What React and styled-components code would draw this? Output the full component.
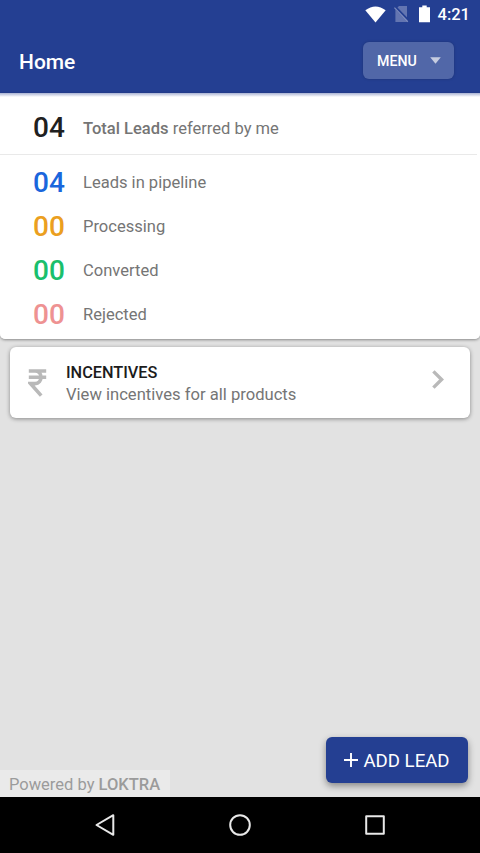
import React from "react";
import styled, { createGlobalStyle } from "styled-components";

const leads = [
  { count: "04", label: "Leads in pipeline", color: "#1a66dc" },
  { count: "00", label: "Processing", color: "#eb9f20" },
  { count: "00", label: "Converted", color: "#1abf6c" },
  { count: "00", label: "Rejected", color: "#ee9292" },
];

function StatusBar() {
  return (
    <Status>
      <svg width="21" height="17" viewBox="0 0 21 17">
        <path d="M0.3 4.2Q10.5 -3.4 20.7 4.2L10.5 16.6Z" fill="#fff" />
      </svg>
      <svg width="16" height="18" viewBox="0 0 16 18">
        <path d="M5 1H13V17H1.4V4.6Z" fill="#6375b1" />
        <path d="M1.2 2.2L14.2 15.8" stroke="#243f92" strokeWidth="3" />
        <path d="M0.4 2.6L13.8 16.8" stroke="#7f8dbf" strokeWidth="1.3" />
      </svg>
      <svg width="11" height="18" viewBox="0 0 11 18">
        <path d="M3.3 0.5H7.7V2.3H11V17.3H0V2.3H3.3Z" fill="#fff" />
      </svg>
      <Clock>4:21</Clock>
    </Status>
  );
}

function App() {
  return (
    <Screen>
      <GlobalStyle />
      <StatusBar />
      <Header>
        <Title>Home</Title>
        <MenuBtn>
          MENU
          <svg width="11" height="7" viewBox="0 0 11 7">
            <path d="M0.2 0.2H10.8L5.5 6.8Z" fill="#c6cce0" />
          </svg>
        </MenuBtn>
      </Header>

      <Summary>
        <TotalRow>
          <Count $color="#202020">04</Count>
          <TotalLabel>
            <b>Total Leads</b> referred by me
          </TotalLabel>
        </TotalRow>
        <LeadList>
          {leads.map((lead) => (
            <LeadRow key={lead.label}>
              <Count $color={lead.color}>{lead.count}</Count>
              <Label>{lead.label}</Label>
            </LeadRow>
          ))}
        </LeadList>
      </Summary>

      <Incentives>
        <svg width="19" height="28" viewBox="0 0 19 28">
          <path
            d="M0.8 2H18.2M0.8 8.2H18.2M2 2H7C15 2 15 14.6 7 14.6H2.6L13.2 26.6"
            fill="none"
            stroke="#b9b9b9"
            strokeWidth="3.6"
          />
        </svg>
        <IncentiveText>
          <IncentiveTitle>INCENTIVES</IncentiveTitle>
          <IncentiveInfo>View incentives for all products</IncentiveInfo>
        </IncentiveText>
        <Chevron width="12" height="19" viewBox="0 0 12 19">
          <path
            d="M1.4 1.4L9.6 9.5L1.4 17.6"
            fill="none"
            stroke="#b9b9b9"
            strokeWidth="3.4"
          />
        </Chevron>
      </Incentives>

      <Bottom>
        <Powered>
          Powered by <b>LOKTRA</b>
        </Powered>
        <AddBtn>
          <svg width="14" height="14" viewBox="0 0 14 14">
            <path d="M7 0V14M0 7H14" stroke="#fff" strokeWidth="1.9" />
          </svg>
          <AddText>ADD LEAD</AddText>
        </AddBtn>
      </Bottom>

      <NavBar>
        <svg width="22" height="24" viewBox="0 0 22 24">
          <path
            d="M19.3 2.2V21.8L2.5 12Z"
            fill="none"
            stroke="#e8e8e8"
            strokeWidth="2"
            strokeLinejoin="round"
          />
        </svg>
        <svg width="24" height="24" viewBox="0 0 24 24">
          <circle cx="12" cy="12" r="9.8" fill="none" stroke="#e8e8e8" strokeWidth="2" />
        </svg>
        <svg width="22" height="22" viewBox="0 0 22 22">
          <rect
            x="2.2"
            y="2.2"
            width="17.6"
            height="17.6"
            fill="none"
            stroke="#e8e8e8"
            strokeWidth="2"
            strokeLinejoin="round"
          />
        </svg>
      </NavBar>
    </Screen>
  );
}

export default App;

const GlobalStyle = createGlobalStyle`
  * {
    box-sizing: border-box;
  }
  body {
    margin: 0;
    font-family: Roboto, "Liberation Sans", sans-serif;
  }
  svg {
    display: block;
    flex-shrink: 0;
  }
  b {
    font-weight: 500;
  }
`;

const Screen = styled.div`
  display: flex;
  flex-direction: column;
  width: 480px;
  height: 853px;
  overflow: hidden;
  background: #e2e2e2;
`;

const Status = styled.div`
  display: flex;
  align-items: center;
  justify-content: flex-end;
  gap: 8px;
  height: 28px;
  padding-right: 10px;
  background: #243f92;

  svg:nth-of-type(2) {
    margin-right: 1px;
  }
`;

const Clock = styled.span`
  color: #fff;
  font-size: 16.5px;
  font-weight: 500;
  line-height: 29px;
`;

const Header = styled.header`
  display: flex;
  align-items: center;
  justify-content: space-between;
  height: 65px;
  padding: 0 26px 0 19px;
  background: #243f92;
`;

const Title = styled.h1`
  margin: 3px 0 0;
  color: #fff;
  font-size: 21px;
  font-weight: 500;
`;

const MenuBtn = styled.button`
  display: flex;
  align-items: center;
  justify-content: space-between;
  width: 91px;
  height: 37px;
  padding: 0 13px 0 14px;
  border: none;
  border-radius: 6px;
  background: #5167a8;
  box-shadow: 0 0 3px rgba(0, 0, 0, 0.2);
  color: #fff;
  font-family: inherit;
  font-size: 14.2px;
  font-weight: 500;
`;

const Summary = styled.section`
  height: 246px;
  border-radius: 0 0 5px 5px;
  background: linear-gradient(#a9b3d3, #fff 4px);
  box-shadow: 0 1px 3px rgba(0, 0, 0, 0.4);
`;

const TotalRow = styled.div`
  display: flex;
  align-items: center;
  height: 62px;
  margin-right: 3px;
  padding: 9px 0 0 33px;
  border-bottom: 1px solid #e9e9e9;
`;

const LeadList = styled.div`
  padding-top: 5px;
`;

const LeadRow = styled.div`
  display: flex;
  align-items: center;
  height: 44.2px;
  padding: 1px 0 0 33px;
`;

const Count = styled.span`
  width: 50px;
  color: ${(props) => props.$color};
  font-size: 28px;
  font-weight: 500;
  line-height: 32px;
`;

const Label = styled.span`
  color: #757575;
  font-size: 16.55px;
  line-height: 20px;
`;

const TotalLabel = styled(Label)`
  padding-top: 2px;
`;

const Incentives = styled.section`
  display: flex;
  align-items: center;
  height: 71px;
  margin: 8px 10px 0;
  padding: 0 26px 0 18px;
  border-radius: 6px;
  background: #fff;
  box-shadow: 0 1px 4px rgba(0, 0, 0, 0.4);
`;

const IncentiveText = styled.div`
  flex: 1;
  padding-top: 3px;
  margin-left: 19px;
`;

const IncentiveTitle = styled.div`
  color: #1c1c1c;
  font-size: 16.3px;
  font-weight: 500;
  line-height: 22px;
`;

const IncentiveInfo = styled.div`
  color: #757575;
  font-size: 16.6px;
  line-height: 22px;
`;

const Chevron = styled.svg`
  margin-bottom: 6px;
`;

const Bottom = styled.div`
  display: flex;
  flex: 1;
  align-items: flex-end;
  justify-content: space-between;
  padding-right: 12px;
`;

const Powered = styled.div`
  width: 170px;
  height: 27px;
  padding-left: 9px;
  background: #eaeaea;
  color: #9b9b9b;
  font-size: 16.5px;
  line-height: 29px;
`;

const AddBtn = styled.button`
  display: flex;
  align-items: center;
  justify-content: center;
  gap: 5px;
  width: 142px;
  height: 46px;
  margin-bottom: 14px;
  padding: 0;
  border: none;
  border-radius: 6px;
  background: #243f92;
  box-shadow: 0 3px 7px rgba(0, 0, 0, 0.4);
  color: #fff;
  font-family: inherit;
  font-size: 18.6px;
`;

const AddText = styled.span`
  padding-top: 2px;
`;

const NavBar = styled.nav`
  display: flex;
  align-items: center;
  justify-content: space-between;
  height: 56px;
  padding: 0 94px;
  background: #000;
`;
